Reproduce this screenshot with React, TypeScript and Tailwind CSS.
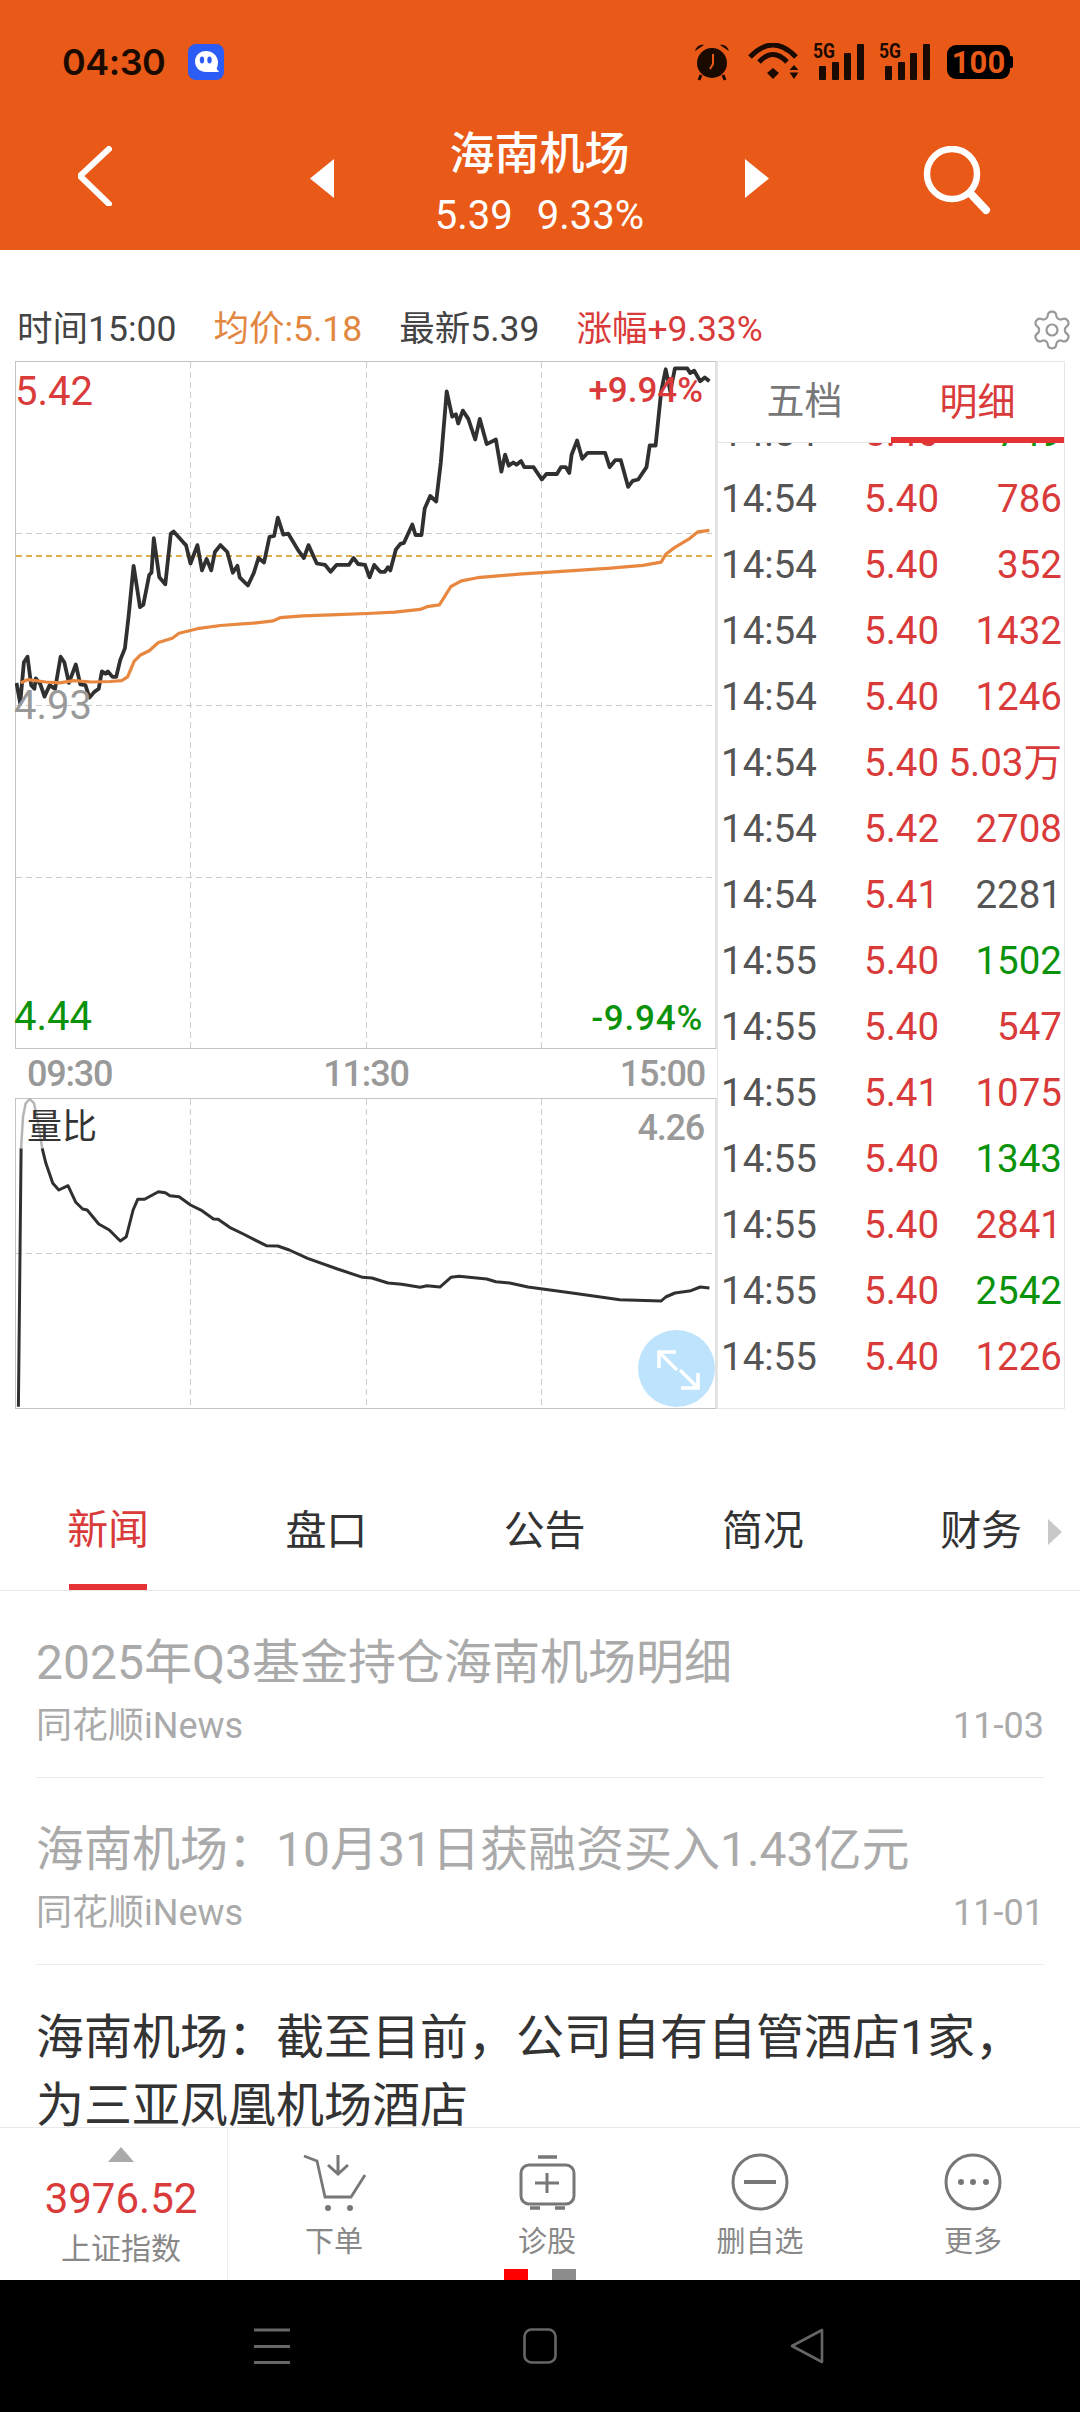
import { Settings } from "lucide-react";

type Pt = [number, number];

// Scales sampled chart coordinates into page pixels for the svg viewBoxes.
const toPage = (list: Pt[], sx: number, sy: number, oy: number) =>
  list.map(([x, y]) => `${(x / sx).toFixed(1)},${(y / sy + oy).toFixed(1)}`).join(" ");

const pricePts: Pt[] = [[36,725],[44,770],[52,680],[60,668],[68,730],[75,738],[78,715],[88,728],[97,755],[108,730],[120,738],[132,668],[140,680],[150,725],[165,685],[175,728],[186,730],[195,757],[205,745],[215,738],[222,700],[230,705],[235,700],[245,712],[253,712],[262,675],[272,650],[280,580],[291,470],[305,560],[312,555],[325,490],[330,485],[335,410],[347,495],[360,510],[372,400],[378,395],[400,420],[405,425],[415,465],[430,425],[440,480],[450,455],[460,480],[468,440],[480,425],[495,440],[507,485],[517,470],[522,495],[540,513],[553,485],[563,453],[575,463],[587,407],[597,405],[605,365],[617,402],[628,400],[650,437],[662,453],[672,425],[690,465],[708,468],[720,483],[733,468],[760,468],[770,453],[780,466],[795,468],[805,495],[815,468],[828,483],[838,483],[845,473],[850,480],[862,435],[872,422],[880,420],[898,380],[905,403],[918,403],[925,345],[937,318],[950,330],[960,245],[973,90],[985,145],[993,140],[998,160],[1008,132],[1020,150],[1035,195],[1045,150],[1060,205],[1080,195],[1092,265],[1100,228],[1108,252],[1118,245],[1125,250],[1135,242],[1142,255],[1162,255],[1180,282],[1190,270],[1213,270],[1222,255],[1232,255],[1240,268],[1245,228],[1257,197],[1268,237],[1280,224],[1318,224],[1328,255],[1340,240],[1352,240],[1368,298],[1378,285],[1390,282],[1408,255],[1415,208],[1428,208],[1440,90],[1450,42],[1460,90],[1470,40],[1497,40],[1503,50],[1512,45],[1525,68],[1535,60],[1545,68]];

const avgPts: Pt[] = [[45,725],[60,718],[100,723],[130,725],[160,720],[200,723],[240,722],[265,720],[278,712],[292,678],[305,665],[325,655],[345,637],[375,628],[390,617],[430,607],[480,600],[550,595],[595,590],[610,583],[660,579],[720,577],[800,574],[860,571],[915,565],[930,559],[957,555],[982,515],[1005,503],[1040,496],[1130,488],[1240,481],[1330,475],[1400,469],[1440,462],[1450,445],[1470,430],[1500,412],[1520,396],[1545,393]];

const ratioPts: Pt[] = [[92,325],[100,370],[115,430],[128,450],[148,437],[165,487],[180,507],[190,510],[215,552],[238,570],[262,603],[275,590],[290,510],[300,478],[315,478],[345,455],[360,458],[370,467],[390,470],[415,495],[440,512],[465,537],[475,538],[500,562],[530,582],[580,617],[605,618],[630,630],[670,655],[735,687],[790,712],[810,714],[845,729],[875,733],[915,742],[930,737],[958,741],[982,712],[1000,709],[1060,717],[1080,725],[1110,729],[1150,741],[1250,760],[1350,779],[1440,783],[1450,771],[1470,759],[1505,752],[1525,741],[1545,744]];

const ratioHead: Pt[] = [[46,325],[50,230],[56,190],[65,177],[74,190],[82,240],[92,325]];
const ratioRise: Pt[] = [[40,1100],[46,325]];

const RED = "text-[#d93a3a]";
const GREEN = "text-[#0a930a]";

const ticks: { t: string; p: string; q: string; c: string }[] = [
  { t: "14:54", p: "5.40", q: "749", c: GREEN },
  { t: "14:54", p: "5.40", q: "786", c: RED },
  { t: "14:54", p: "5.40", q: "352", c: RED },
  { t: "14:54", p: "5.40", q: "1432", c: RED },
  { t: "14:54", p: "5.40", q: "1246", c: RED },
  { t: "14:54", p: "5.40", q: "5.03万", c: RED },
  { t: "14:54", p: "5.42", q: "2708", c: RED },
  { t: "14:54", p: "5.41", q: "2281", c: "text-[#555555]" },
  { t: "14:55", p: "5.40", q: "1502", c: GREEN },
  { t: "14:55", p: "5.40", q: "547", c: RED },
  { t: "14:55", p: "5.41", q: "1075", c: RED },
  { t: "14:55", p: "5.40", q: "1343", c: GREEN },
  { t: "14:55", p: "5.40", q: "2841", c: RED },
  { t: "14:55", p: "5.40", q: "2542", c: GREEN },
  { t: "14:55", p: "5.40", q: "1226", c: RED },
  { t: "14:55", p: "5.39", q: "553", c: GREEN },
];

function Signal() {
  return (
    <svg className="overflow-visible" width="52" height="38" viewBox="0 0 52 38">
      <text x="0" y="15" fontFamily="Roboto" fontWeight="700" fontSize="20" fill="#1a0a00" textLength="22" lengthAdjust="spacingAndGlyphs">5G</text>
      <rect x="6" y="23" width="7" height="14" rx="1" fill="#1a0a00" />
      <rect x="19" y="19" width="7" height="18" rx="1" fill="#1a0a00" />
      <rect x="31" y="10" width="7" height="27" rx="1" fill="#1a0a00" />
      <rect x="44" y="1" width="7" height="36" rx="1" fill="#1a0a00" />
    </svg>
  );
}

function StatusBar() {
  return (
    <div className="h-[124px] flex items-center pl-[62px] pr-[67px]">
      <span className="w-[104px] text-[36px] font-semibold text-[#1a0a00] font-['Inter',sans-serif] tracking-[-0.5px]">04:30</span>
      <svg className="ml-[22px]" width="36" height="36" viewBox="0 0 36 36">
        <rect width="36" height="36" rx="8" fill="#2b5cf6" />
        <path d="M18 7c-6.2 0-11 4.6-11 10.6 0 5.8 4.6 10.4 10.8 10.4h13.4l-2.6-3.2c1-2 1.4-4.4 1.4-7.2C29.600 11.600 24.200 7 18 7z" fill="#fff" />
        <ellipse cx="14" cy="16" rx="2.200" ry="3.400" fill="#2b5cf6" />
        <ellipse cx="21.500" cy="16" rx="2.200" ry="3.400" fill="#2b5cf6" />
      </svg>
      <div className="ml-auto flex items-center">
        <svg width="38" height="38" viewBox="0 0 38 38">
          <circle cx="19" cy="20" r="15" fill="#1a0a00" />
          <path d="M2 8c1-4 5-7 9-6zM36 8c-1-4-5-7-9-6z" fill="#1a0a00" />
          <path d="M8 32l-2 5M30 32l2 5" stroke="#1a0a00" strokeWidth="3" />
          <path d="M20 11v10l-3 5" stroke="#e95a18" strokeWidth="2" fill="none" />
        </svg>
        <svg className="ml-[17px]" width="52" height="38" viewBox="748 43 52 38">
          <path d="M750 57Q773 33 796 57M759 62Q773 47 787 62" stroke="#1a0a00" strokeWidth="5" fill="none" />
          <path d="M767 73l6-5 6 5-6 6z" fill="#1a0a00" />
          <path d="M789.500 70h9l-4.500-5zM789.500 72.500h9l-4.500 6.500z" fill="#1a0a00" />
        </svg>
        <div className="ml-[13px]"><Signal /></div>
        <div className="ml-[14px]"><Signal /></div>
        <div className="ml-[16px] flex items-center">
          <div className="w-[63px] h-[34px] rounded-[9px] bg-black flex items-center justify-center text-[31px] font-bold text-[#e95a18] font-['Roboto',sans-serif] leading-none">100</div>
          <div className="w-[3px] h-[12px] rounded-r-[2px] bg-black" />
        </div>
      </div>
    </div>
  );
}

function TitleBar() {
  return (
    <div className="h-[126px] flex items-start pl-[78px] text-white">
      <svg className="mt-[22px]" width="34" height="60" viewBox="0 0 34 60">
        <path d="M33 1L2 30l31 30" stroke="#fff" strokeWidth="6" fill="none" />
      </svg>
      <svg className="ml-[198px] mt-[35px]" width="24" height="39" viewBox="0 0 24 39">
        <path d="M24 0v39L0 19.500z" fill="#fff" />
      </svg>
      <div className="w-[411px] flex flex-col items-center">
        <div className="text-[45px] leading-[58px] font-medium mt-[2px]">海南机场</div>
        <div className="text-[40px] leading-[50px] mt-[7px] flex gap-[24px]">
          <span>5.39</span>
          <span>9.33%</span>
        </div>
      </div>
      <svg className="mt-[35px]" width="24" height="39" viewBox="0 0 24 39">
        <path d="M0 0v39l24-19.500z" fill="#fff" />
      </svg>
      <svg className="ml-[152px] mt-[22px]" width="72" height="72" viewBox="0 0 72 72">
        <circle cx="31" cy="28" r="25" stroke="#fff" strokeWidth="6.500" fill="none" />
        <path d="M49 47l16 17" stroke="#fff" strokeWidth="8" strokeLinecap="round" />
      </svg>
    </div>
  );
}

function InfoRow() {
  return (
    <div className="h-[111px] pt-[49px] pl-[17px] pr-[6px] flex items-center gap-[37px] text-[35.5px] whitespace-nowrap">
      <span className="text-[#444444]">时间15:00</span>
      <span className="text-[#e2873f]">均价:5.18</span>
      <span className="text-[#444444]">最新5.39</span>
      <span className={RED}>涨幅+9.33%</span>
      <Settings className="ml-auto text-[#999999]" size={44} strokeWidth={1.2} />
    </div>
  );
}

function PriceChart() {
  return (
    <div className="relative w-[702px] h-[688px]">
      <svg className="absolute inset-0" width="702" height="688" viewBox="15 361 702 688">
        <rect x="15.500" y="361.500" width="700.500" height="687" fill="none" stroke="#c4c4c4" />
        <g stroke="#cccccc" strokeDasharray="6 4" fill="none">
          <path d="M16 533.500H716M16 705.500H716M16 877.500H716" />
          <path d="M190.500 362V1048M366.500 362V1048M541.500 362V1048" />
        </g>
        <path d="M16 556H716" stroke="#e0b04e" strokeWidth="2" strokeDasharray="6 4" />
        <polyline points={toPage(pricePts, 2.178, 2.178, 350)} fill="none" stroke="#303030" strokeWidth="3.800" strokeLinejoin="round" />
        <polyline points={toPage(avgPts, 2.178, 2.178, 350)} fill="none" stroke="#e8873f" strokeWidth="3.200" strokeLinejoin="round" />
      </svg>
      <span className={`absolute left-0 top-[11px] text-[40px] leading-[40px] ${RED}`}>5.42</span>
      <span className="absolute -left-[1px] top-[325px] text-[40px] leading-[40px] text-[#999999]">4.93</span>
      <span className={`absolute -left-[1px] top-[636px] text-[40px] leading-[40px] ${GREEN}`}>4.44</span>
      <span className={`absolute right-[14px] top-[10px] text-[35px] leading-[40px] font-medium ${RED}`}>+9.94%</span>
      <span className={`absolute right-[14px] top-[638px] text-[35px] leading-[40px] font-medium tracking-[0.8px] ${GREEN}`}>-9.94%</span>
    </div>
  );
}

function RatioChart() {
  return (
    <div className="relative w-[702px] h-[311px]">
      <svg className="absolute inset-0" width="702" height="311" viewBox="15 1098 702 311">
        <rect x="15.500" y="1098.500" width="700.500" height="310" fill="none" stroke="#c4c4c4" />
        <g stroke="#cccccc" strokeDasharray="6 4" fill="none">
          <path d="M16 1253.500H716" />
          <path d="M190.500 1099V1408M366.500 1099V1408M541.500 1099V1408" />
        </g>
        <polyline points={toPage(ratioRise, 2.178, 3, 1040)} fill="none" stroke="#303030" strokeWidth="3" />
        <polyline points={toPage(ratioHead, 2.178, 3, 1040)} fill="none" stroke="#b5b5b5" strokeWidth="2.500" />
        <polyline points={toPage(ratioPts, 2.178, 3, 1040)} fill="none" stroke="#303030" strokeWidth="3" strokeLinejoin="round" />
      </svg>
      <span className="absolute left-[12px] top-[10px] text-[35px] leading-[40px] text-[#333333]">量比</span>
      <span className="absolute right-[13px] top-[10px] text-[36px] leading-[40px] font-medium tracking-[-1.2px] text-[#999999]">4.26</span>
      <div className="absolute right-[2px] bottom-[2px] w-[77px] h-[77px] rounded-full bg-[#bde3fd] flex items-center justify-center">
        <svg width="77" height="77" viewBox="0 0 77 77">
          <path d="M38 22H21v16M21 22l18 18M43 58h17V43M60 58L42 40" stroke="#fff" strokeWidth="3.500" fill="none" />
        </svg>
      </div>
    </div>
  );
}

function TickPanel() {
  return (
    <div className="w-[348px] h-[1048px] border border-[#e6e6e6] flex flex-col">
      <div className="h-[81px] shrink-0 flex border-b border-[#e6e6e6] text-[38px]">
        <div className="flex-1 flex items-center justify-center text-[#777777] pb-[1px]">五档</div>
        <div className={`flex-1 flex items-center justify-center border-b-[6px] border-[#e53333] -mb-px pt-[5px] ${RED}`}>明细</div>
      </div>
      <div className="flex-1 overflow-hidden">
        <div className="-mt-[43px] pl-[3px] pr-[2px]">
          {ticks.map((r, i) => (
            <div key={i} className="h-[66px] flex items-center text-[38.5px] whitespace-nowrap">
              <span className="w-[143px] text-[#555555]">{r.t}</span>
              <span className={RED}>{r.p}</span>
              <span className={`flex-1 text-right ${r.c}`}>{r.q}</span>
            </div>
          ))}
        </div>
      </div>
    </div>
  );
}

function Market() {
  return (
    <div className="h-[1048px] flex">
      <div className="w-[717px] pl-[15px] flex flex-col">
        <PriceChart />
        <div className="h-[49px] pl-[12px] pr-[12px] flex items-center justify-between text-[36px] font-medium tracking-[-1.2px] text-[#999999]">
          <span>09:30</span>
          <span>11:30</span>
          <span>15:00</span>
        </div>
        <RatioChart />
      </div>
      <TickPanel />
    </div>
  );
}

function NewsTabs() {
  const tabs = ["新闻", "盘口", "公告", "简况", "财务"];
  return (
    <div className="mt-[64px] h-[118px] shrink-0 flex border-b border-[#e8e8e8] relative">
      <div className="-ml-[1px] flex">
        {tabs.map((t, i) => (
          <div key={t} className="w-[218.25px] shrink-0 flex flex-col items-center">
            <div className={`h-[112px] pt-[5px] flex items-center text-[41px] ${i === 0 ? RED : "text-[#333333]"}`}>{t}</div>
            {i === 0 && <div className="w-[78px] h-[6px] bg-[#e53333]" />}
          </div>
        ))}
      </div>
      <svg className="absolute left-[1048px] top-[46px]" width="14" height="26" viewBox="0 0 14 26">
        <path d="M0 0l14 13L0 26z" fill="#c8c8c8" />
      </svg>
    </div>
  );
}

function NewsItem({ title, date }: { title: string; date: string }) {
  return (
    <div className="h-[187px] border-b border-[#ececec] pt-[38px]">
      <div className="text-[48px] leading-[68px] text-[#aaaaaa] whitespace-nowrap">{title}</div>
      <div className="mt-[7px] flex justify-between text-[36px] leading-[44px] text-[#aaaaaa]">
        <span>同花顺iNews</span>
        <span>{date}</span>
      </div>
    </div>
  );
}

function News() {
  return (
    <div className="h-[536px] shrink-0 overflow-hidden px-[36px]">
      <NewsItem title="2025年Q3基金持仓海南机场明细" date="11-03" />
      <NewsItem title="海南机场：10月31日获融资买入1.43亿元" date="11-01" />
      <div className="pt-[39px] text-[48px] leading-[68px] text-[#333333]">
        海南机场：截至目前，公司自有自管酒店1家，为三亚凤凰机场酒店
      </div>
    </div>
  );
}

function ActionIcon({ kind }: { kind: "cart" | "diag" | "minus" | "more" }) {
  const stroke = "#777777";
  return (
    <svg width="80" height="60" viewBox="0 0 80 60" fill="none" stroke={stroke} strokeWidth="3">
      {kind === "cart" && (
        <>
          <path d="M10 4l13 5 8 36h26l14-22" strokeWidth="2.800" />
          <path d="M44 3v19M34 13l10 9 10-9" />
          <circle cx="34" cy="56" r="3" fill={stroke} stroke="none" />
          <circle cx="56" cy="56" r="3" fill={stroke} stroke="none" />
        </>
      )}
      {kind === "diag" && (
        <>
          <path d="M31 5h19" strokeWidth="3.500" />
          <rect x="14" y="13" width="53" height="39" rx="8" />
          <path d="M28 31h24M40 21v20" />
          <path d="M23 56h10M48 56h10" strokeWidth="3.500" />
        </>
      )}
      {kind === "minus" && (
        <>
          <circle cx="40" cy="30" r="27" />
          <path d="M24 30h32" strokeWidth="4" />
        </>
      )}
      {kind === "more" && (
        <>
          <circle cx="40" cy="30" r="27" />
          <circle cx="28" cy="30" r="3" fill={stroke} stroke="none" />
          <circle cx="40" cy="30" r="3" fill={stroke} stroke="none" />
          <circle cx="53" cy="30" r="3" fill={stroke} stroke="none" />
        </>
      )}
    </svg>
  );
}

function ActionBar() {
  const items: { k: "cart" | "diag" | "minus" | "more"; label: string }[] = [
    { k: "cart", label: "下单" },
    { k: "diag", label: "诊股" },
    { k: "minus", label: "删自选" },
    { k: "more", label: "更多" },
  ];
  return (
    <div className="relative h-[153px] shrink-0 bg-white border-t border-[#e8e8e8] flex">
      <div className="w-[228px] shrink-0 border-r border-[#eeeeee] flex flex-col items-center pt-[19px] pl-[15px]">
        <svg width="26" height="15" viewBox="0 0 26 15"><path d="M13 0l13 15H0z" fill="#aaaaaa" /></svg>
        <div className={`mt-[14px] text-[42px] leading-[46px] whitespace-nowrap ${RED}`}>3976.52</div>
        <div className="mt-[7px] text-[30px] leading-[40px] text-[#888888] whitespace-nowrap">上证指数</div>
      </div>
      <div className="flex-1 grid grid-cols-4">
        {items.map((it) => (
          <div key={it.label} className="flex flex-col items-center pt-[24px] -ml-[1px]">
            <ActionIcon kind={it.k} />
            <div className="mt-[8px] text-[29px] leading-[44px] text-[#888888]">{it.label}</div>
          </div>
        ))}
      </div>
      <div className="absolute left-[504px] bottom-0 w-[24px] h-[11px] bg-[#ff0000]" />
      <div className="absolute left-[552px] bottom-0 w-[24px] h-[11px] bg-[#8c8c8c]" />
    </div>
  );
}

function NavBar() {
  return (
    <div className="h-[132px] shrink-0 bg-black flex items-start pl-[254px] pt-[48px]">
      <svg width="36" height="36" viewBox="0 0 36 36" stroke="#666666" strokeWidth="3">
        <path d="M0 2h36M0 18.500h36M0 34.500h36" />
      </svg>
      <svg className="ml-[233px]" width="34" height="36" viewBox="0 0 34 36" fill="none" stroke="#666666" strokeWidth="2.600">
        <rect x="1.500" y="1.500" width="31" height="33" rx="7" />
      </svg>
      <svg className="ml-[233px]" width="34" height="36" viewBox="0 0 34 36" fill="none" stroke="#666666" strokeWidth="2.600" strokeLinejoin="round">
        <path d="M32 2v32L2 18z" />
      </svg>
    </div>
  );
}

export default function App() {
  return (
    <div className="w-[1080px] h-[2412px] overflow-hidden bg-white flex flex-col font-['Roboto','Noto_Sans_CJK_SC',sans-serif]">
      <div className="h-[250px] shrink-0 bg-[#e95a18]">
        <StatusBar />
        <TitleBar />
      </div>
      <InfoRow />
      <Market />
      <NewsTabs />
      <News />
      <ActionBar />
      <NavBar />
    </div>
  );
}
